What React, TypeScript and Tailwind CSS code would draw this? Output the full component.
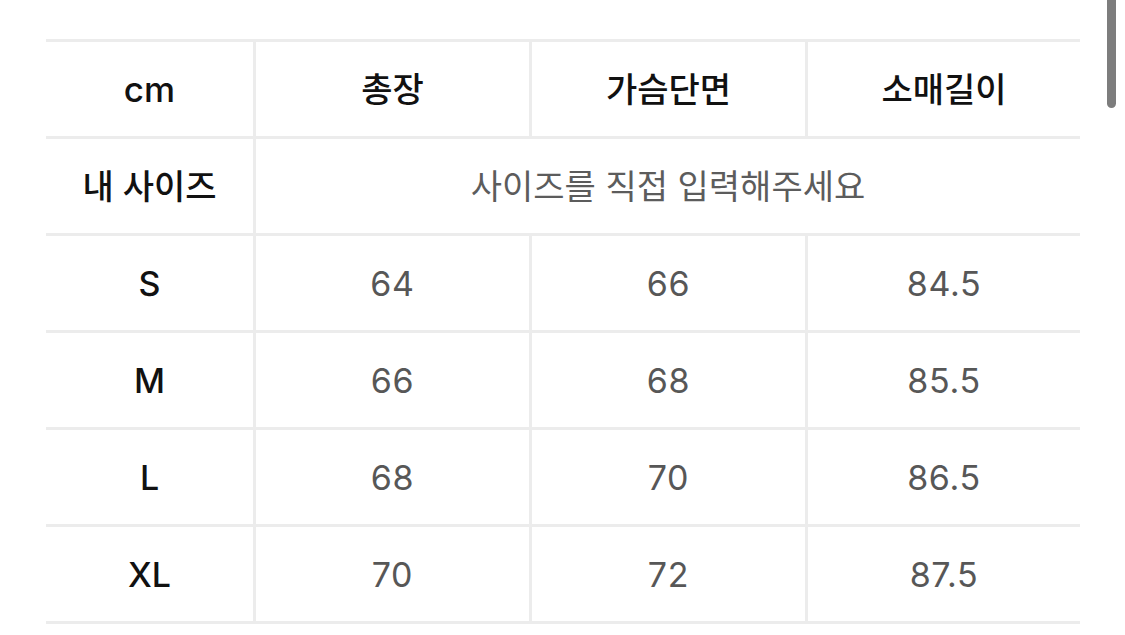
import React from 'react'

type Row = {
  label: string
  values: string[]
}

const headers = ['총장', '가슴단면', '소매길이']

const rows: Row[] = [
  { label: 'S', values: ['64', '66', '84.5'] },
  { label: 'M', values: ['66', '68', '85.5'] },
  { label: 'L', values: ['68', '70', '86.5'] },
  { label: 'XL', values: ['70', '72', '87.5'] },
]

const cell = 'h-[97px] flex items-center justify-center border-b-[3px] border-[#ececec]'
const divider = 'border-l-[3px]'

export default function App() {
  return (
    <div
      className="relative w-[1125px] h-[635px] overflow-hidden bg-white"
      style={{ fontFamily: 'Inter, "Noto Sans CJK KR", sans-serif' }}
    >
      {/* size table */}
      <div className="ml-[46px] mt-[39px] w-[1034px] border-t-[3px] border-[#ececec] grid grid-cols-[207px_276px_276px_275px]">
        <div className={`${cell} text-[35px] font-medium text-[#111]`}>cm</div>
        {headers.map((h) => (
          <div key={h} className={`${cell} ${divider} text-[34px] font-medium text-[#111]`}>
            {h}
          </div>
        ))}

        <div className={`${cell} text-[34px] font-medium text-[#111]`}>내 사이즈</div>
        <div className={`${cell} ${divider} col-span-3 text-[34px] text-[#5c5c5c]`}>
          사이즈를 직접 입력해주세요
        </div>

        {rows.map((row) => (
          <React.Fragment key={row.label}>
            <div className={`${cell} text-[34px] font-medium text-[#111]`}>{row.label}</div>
            {row.values.map((v, i) => (
              <div key={i} className={`${cell} ${divider} text-[34px] tracking-[0.02em] text-[#575757]`}>
                {v}
              </div>
            ))}
          </React.Fragment>
        ))}
      </div>

      {/* overlay scrollbar */}
      <div className="absolute left-[1107px] top-0 w-[9px] h-[108px] rounded-b-full bg-[#7d7d7d]" />
    </div>
  )
}
